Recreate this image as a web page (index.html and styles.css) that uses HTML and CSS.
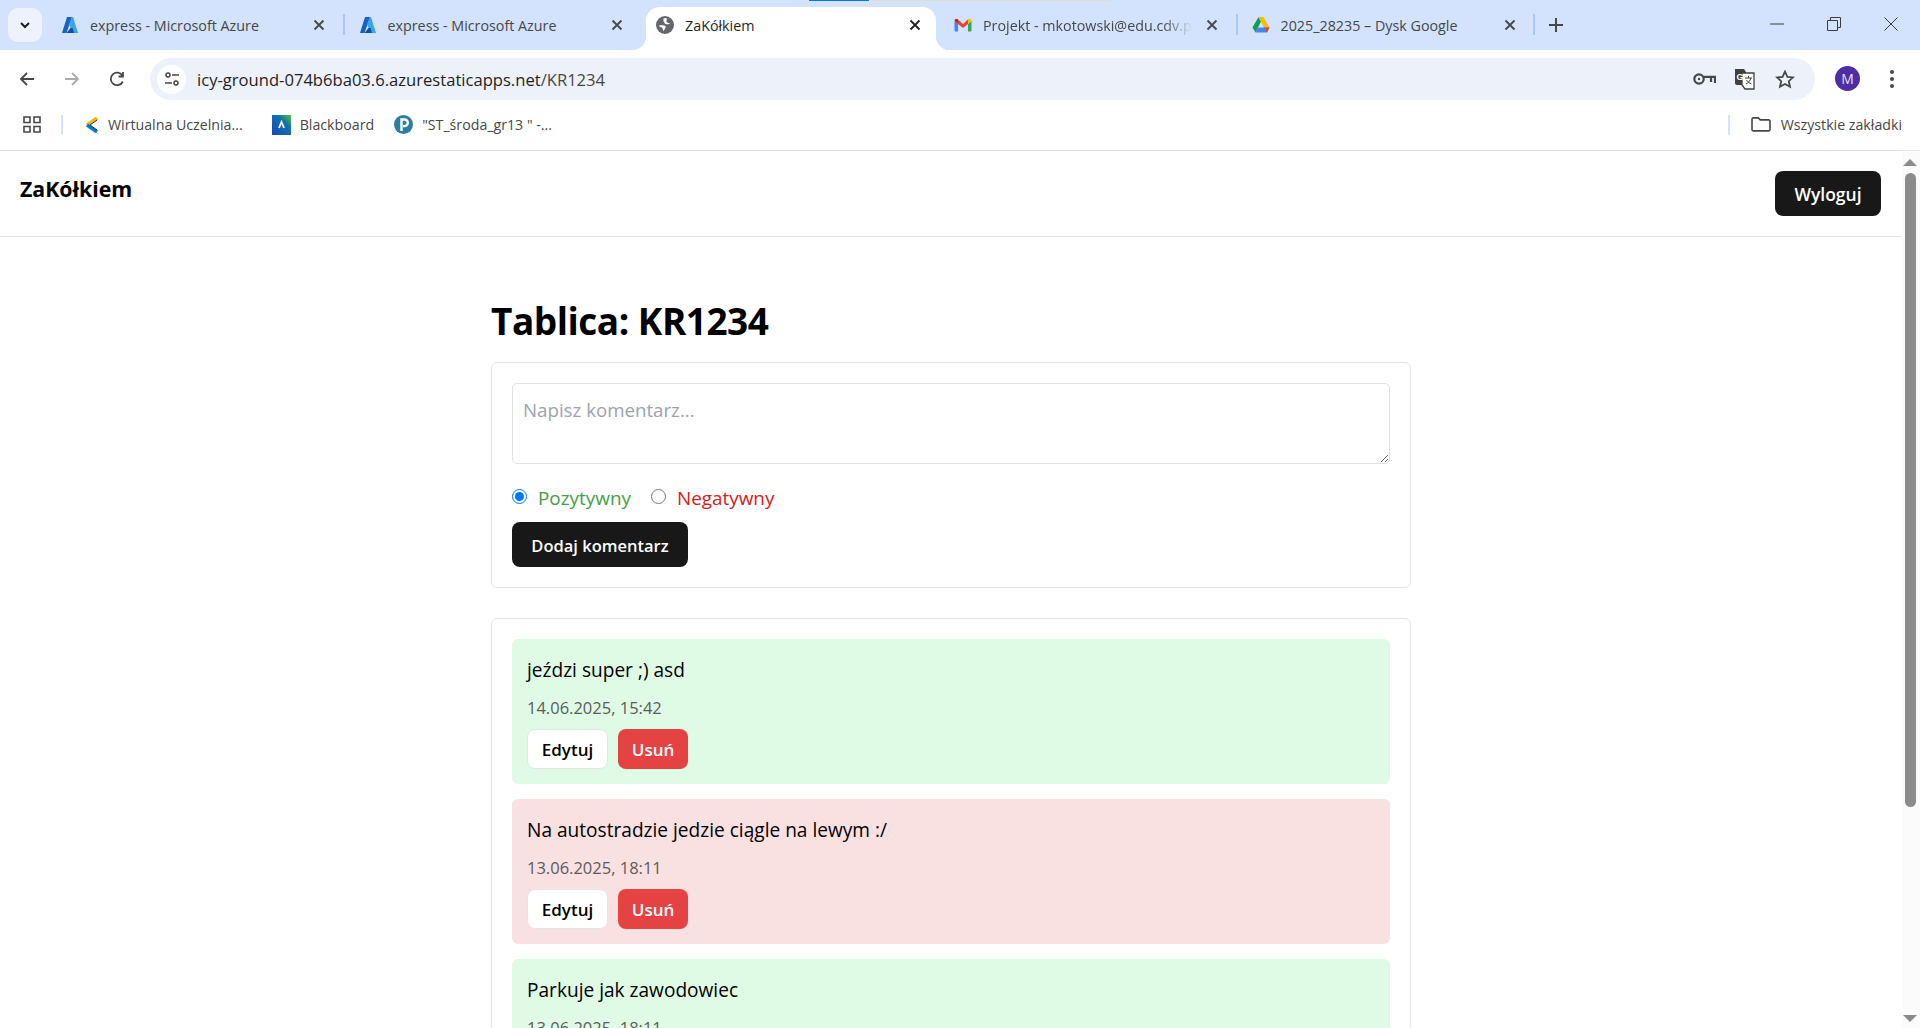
FILE: index.html
```html
<!DOCTYPE html>
<html lang="pl">
<head>
    <meta charset="UTF-8">
    <title>ZaKółkiem</title>
    <link rel="stylesheet" href="styles.css">
</head>
<body>
    <div class="tabstrip">
        <div class="tab-progress"></div>
        <div class="tab-search">
            <svg width="14" height="14" viewBox="0 0 14 14"><path d="M3 5l4 4 4-4" fill="none" stroke="#1f1f1f" stroke-width="2"/></svg>
        </div>
        <div class="tab tab-sep">
            <svg class="tab-icon" viewBox="0 0 18 18"><path d="M6 1h5L5.500 17H1z" fill="#1a62bd"/><path d="M11 1h1l5 16h-5.500L8 8z" fill="#3aa4ea"/><path d="M5.500 17l4-5h2l1.500 5z" fill="#0f4f9e"/></svg>
            <span class="tab-title">express - Microsoft Azure</span>
            <svg class="tab-close" viewBox="0 0 12 12"><path d="M1.500 1.500l9 9M10.500 1.500l-9 9"/></svg>
        </div>
        <div class="tab">
            <svg class="tab-icon" viewBox="0 0 18 18"><path d="M6 1h5L5.500 17H1z" fill="#1a62bd"/><path d="M11 1h1l5 16h-5.500L8 8z" fill="#3aa4ea"/><path d="M5.500 17l4-5h2l1.500 5z" fill="#0f4f9e"/></svg>
            <span class="tab-title">express - Microsoft Azure</span>
            <svg class="tab-close" viewBox="0 0 12 12"><path d="M1.500 1.500l9 9M10.500 1.500l-9 9"/></svg>
        </div>
        <div class="tab tab-active">
            <svg class="tab-icon" viewBox="0 0 18 18"><circle cx="9" cy="9" r="9" fill="#63666a"/><path d="M7.500 2.500c1-.5 2.500-.5 3.500 0 0 1.500-1 2.500-.5 3.500 1 1 2.500 1 3.500 1.500-1 1-3 1-4.500.5C8 7 7 5 7.500 2.500z" fill="#fff"/><path d="M3 9.500c2-.5 5-.5 6.500.5.5 1.500-.5 3-2 5-1-1-.5-2.500-1.500-3.500C5 11 3.500 11 3 9.500z" fill="#fff"/></svg>
            <span class="tab-title">ZaKółkiem</span>
            <svg class="tab-close" viewBox="0 0 12 12"><path d="M1.500 1.500l9 9M10.500 1.500l-9 9"/></svg>
        </div>
        <div class="tab tab-sep">
            <svg class="tab-icon" viewBox="0 0 18 18"><path d="M.5 5v9.500a1 1 0 0 0 1 1H4V8z" fill="#4285f4"/><path d="M17.500 5v9.500a1 1 0 0 1-1 1H14V8z" fill="#34a853"/><path d="M4 8V3.500l5 4.500 5-4.500V8l-5 4z" fill="#ea4335"/><path d="M.5 5c0-2 2.200-2.800 3.500-1.500V8z" fill="#c5221f"/><path d="M17.500 5c0-2-2.200-2.800-3.500-1.500V8z" fill="#fbbc04"/></svg>
            <span class="tab-title tab-fade">Projekt - mkotowski@edu.cdv.pl - Poczta</span>
            <svg class="tab-close" viewBox="0 0 12 12"><path d="M1.500 1.500l9 9M10.500 1.500l-9 9"/></svg>
        </div>
        <div class="tab tab-sep">
            <svg class="tab-icon" viewBox="0 0 18 18"><path d="M6.500 1L9 5.500 3.500 16.500.5 11.500z" fill="#0f9d58"/><path d="M6.500 1h5l6 10.500H12z" fill="#fbbc04"/><path d="M3.500 16.500L6 11.500h11.500L15 16.500z" fill="#4285f4"/><path d="M17.500 11.500H12l3 5z" fill="#ea4335"/></svg>
            <span class="tab-title">2025_28235 – Dysk Google</span>
            <svg class="tab-close" viewBox="0 0 12 12"><path d="M1.500 1.500l9 9M10.500 1.500l-9 9"/></svg>
        </div>
        <svg class="tab-new" viewBox="0 0 16 16"><path d="M8 1v14M1 8h14"/></svg>
        <div class="window-btns">
            <svg viewBox="0 0 14 14"><path d="M0 7h14"/></svg>
            <svg viewBox="0 0 14 14"><path d="M.5 3.500h10v10H.5zM3.500 3.500V.5h10v10h-3"/></svg>
            <svg viewBox="0 0 14 14"><path d="M.5.5l13 13M13.500.5l-13 13"/></svg>
        </div>
    </div>

    <div class="toolbar">
        <div class="nav-btns">
            <svg viewBox="0 0 16 16"><path d="M15 8H2M8 2L2 8l6 6" stroke="#474747"/></svg>
            <svg viewBox="0 0 16 16"><path d="M1 8h13M8 2l6 6-6 6" stroke="#a9abad"/></svg>
            <svg viewBox="0 0 16 16"><path d="M13.800 10.500A6.300 6.300 0 1 1 13.400 4.500M14 1v4.500H9.500" stroke="#474747"/></svg>
        </div>
        <div class="omnibox">
            <div class="site-info">
                <svg viewBox="0 0 16 16" width="16" height="16"><circle cx="4" cy="4" r="2" fill="none" stroke="#474747" stroke-width="1.500"/><path d="M8 4h7M1 12h7" stroke="#474747" stroke-width="1.500"/><circle cx="12" cy="12" r="2" fill="none" stroke="#474747" stroke-width="1.500"/></svg>
            </div>
            <span class="url">icy-ground-074b6ba03.6.azurestaticapps.net<span class="url-path">/KR1234</span></span>
            <div class="omni-icons">
                <svg width="23" height="12" viewBox="0 0 23 12"><circle cx="6" cy="6" r="4.700" fill="none" stroke="#474747" stroke-width="2.200"/><circle cx="6" cy="6" r="1.200" fill="#474747"/><path d="M10.500 3.800H22V10M18 3.800V9" fill="none" stroke="#474747" stroke-width="2.200"/></svg>
                <svg width="21" height="21" viewBox="0 0 21 21"><path d="M1 0h9l2 3v13H3a2 2 0 0 1-2-2z" fill="#3f3f3f"/><path d="M8 4h12v16H11l-3-4z" fill="#fff" stroke="#3f3f3f" stroke-width="1.300"/><text x="2.500" y="10.500" font-size="9" font-weight="700" fill="#fff" font-family="Liberation Sans">G</text><path d="M11 9h7M14.500 7v2M17 9c-1 3-3 5-5 6M12.500 11c1 2 3 3 5 4" fill="none" stroke="#3f3f3f"/></svg>
                <svg class="omni-star" width="20" height="19" viewBox="0 0 20 19"><path d="M10 1.500l2.400 5.300 5.600.6-4.200 3.800 1.200 5.600L10 14l-5 2.800 1.200-5.600L2 7.400l5.600-.6z" fill="none" stroke="#474747" stroke-width="1.800"/></svg>
            </div>
        </div>
        <div class="avatar">M</div>
        <svg class="kebab" width="4" height="18" viewBox="0 0 4 18"><circle cx="2" cy="2" r="2"/><circle cx="2" cy="9" r="2"/><circle cx="2" cy="16" r="2"/></svg>
    </div>

    <div class="bookmarks">
        <svg class="apps" width="18" height="17" viewBox="0 0 18 17"><path d="M1 1h6v5.500H1zM11 1h6v5.500h-6zM1 10.500h6V16H1zM11 10.500h6V16h-6z" fill="none" stroke="#474747" stroke-width="1.600"/></svg>
        <div class="bm-sep"></div>
        <div class="bm bm-first">
            <svg width="14" height="16" viewBox="0 0 14 16"><path d="M13 1L3 8" fill="none" stroke="#f5b800" stroke-width="3.500"/><path d="M3 8l10 7" fill="none" stroke="#0a7bc8" stroke-width="3.500"/><path d="M13 3L6 8l7 5" fill="none" stroke="#123a5e" stroke-width="1"/></svg>
            <span>Wirtualna Uczelnia...</span>
        </div>
        <div class="bm bm-board">
            <svg width="19" height="20" viewBox="0 0 19 20"><defs><linearGradient id="bbg" x1="0" y1="1" x2="1" y2="0"><stop offset="0" stop-color="#1747b8"/><stop offset=".65" stop-color="#1273a8"/><stop offset="1" stop-color="#5cc02c"/></linearGradient></defs><rect width="19" height="20" fill="url(#bbg)"/><path d="M7 13l2.500-6L12 13" fill="none" stroke="#fff" stroke-width="1.800"/></svg>
            <span>Blackboard</span>
        </div>
        <div class="bm bm-pearson">
            <svg width="19" height="19" viewBox="0 0 19 19"><circle cx="9.500" cy="9.500" r="9.500" fill="#2a7f9e"/><path d="M7.500 16V4.500h3a3.300 3.300 0 0 1 0 6.600H9" fill="none" stroke="#fff" stroke-width="2.400"/></svg>
            <span>"ST_środa_gr13 " -...</span>
        </div>
        <div class="bm-sep bm-sep-right"></div>
        <div class="bm bm-all">
            <svg width="20" height="15" viewBox="0 0 20 15"><path d="M1 2.200a1.300 1.300 0 0 1 1.300-1.300h5l2 2h8.400a1.300 1.300 0 0 1 1.300 1.300v8.400a1.300 1.300 0 0 1-1.300 1.300H2.300a1.300 1.300 0 0 1-1.300-1.300z" fill="none" stroke="#474747" stroke-width="1.600"/></svg>
            <span>Wszystkie zakładki</span>
        </div>
    </div>

    <div class="viewport">
        <div class="page">
            <header class="site-header">
                <span class="brand">ZaKółkiem</span>
                <button class="btn btn-dark btn-logout">Wyloguj</button>
            </header>
            <main class="container">
                <h1 class="board-title">Tablica: KR1234</h1>
                <section class="card card-form">
                    <textarea class="comment-input" placeholder="Napisz komentarz..."></textarea>
                    <div class="radio-row">
                        <label class="radio-label positive"><input type="radio" name="kind" checked> Pozytywny</label>
                        <label class="radio-label negative"><input type="radio" name="kind"> Negatywny</label>
                    </div>
                    <button class="btn btn-dark btn-add">Dodaj komentarz</button>
                </section>
                <section class="card card-list">
                    <article class="comment comment-pos">
                        <p class="comment-text">jeździ super ;) asd</p>
                        <p class="comment-date">14.06.2025, 15:42</p>
                        <div class="comment-actions"><button class="btn btn-edit">Edytuj</button><button class="btn btn-del">Usuń</button></div>
                    </article>
                    <article class="comment comment-neg">
                        <p class="comment-text">Na autostradzie jedzie ciągle na lewym :/</p>
                        <p class="comment-date">13.06.2025, 18:11</p>
                        <div class="comment-actions"><button class="btn btn-edit">Edytuj</button><button class="btn btn-del">Usuń</button></div>
                    </article>
                    <article class="comment comment-pos">
                        <p class="comment-text">Parkuje jak zawodowiec</p>
                        <p class="comment-date">13.06.2025, 18:11</p>
                    </article>
                </section>
            </main>
        </div>
        <div class="scrollbar">
            <div class="scroll-up"></div>
            <div class="scroll-thumb"></div>
            <div class="scroll-down"></div>
        </div>
    </div>
</body>
</html>
```

FILE: styles.css
```css
* {
    box-sizing: border-box;
}
html, body {
    height: 100%;
}
body {
    margin: 0;
    overflow: hidden;
    display: flex;
    flex-direction: column;
    background: #fff;
    color: #000;
    font-family: "Open Sans", "Liberation Sans", sans-serif;
}

/* browser chrome */
.tabstrip {
    position: relative;
    height: 50px;
    flex: none;
    display: flex;
    align-items: flex-start;
    background: #d3e3fd;
    padding-left: 8px;
}
.tab-progress {
    position: absolute;
    top: 0;
    left: 809px;
    width: 300px;
    height: 1px;
    background: linear-gradient(90deg, #0b78d8 20%, #dcdcdc 20%);
}
.tab-search {
    width: 34px;
    height: 34px;
    margin-top: 8px;
    margin-right: 7px;
    display: flex;
    align-items: center;
    justify-content: center;
    background: #edf2fc;
    border-radius: 10px;
}
.tab {
    position: relative;
    width: 297.5px;
    height: 43px;
    margin-top: 7px;
    padding: 0 21.5px 7px 12px;
    display: flex;
    align-items: center;
    font-size: 14.3px;
    color: #45474a;
}
.tab-sep::after {
    content: "";
    position: absolute;
    right: 2px;
    top: 7px;
    width: 2px;
    height: 21px;
    background: #a8c7fa;
}
.tab-icon {
    width: 18px;
    height: 18px;
    flex: none;
    margin-right: 11px;
}
.tab-title {
    flex: 1;
    margin-right: 14px;
    white-space: nowrap;
    overflow: hidden;
}
.tab-fade {
    -webkit-mask-image: linear-gradient(90deg, #000 86%, transparent 100%);
    mask-image: linear-gradient(90deg, #000 86%, transparent 100%);
}
.tab-close {
    width: 12px;
    height: 12px;
    flex: none;
    fill: none;
    stroke: #45474a;
    stroke-width: 1.800;
}
.tab-active {
    width: 290px;
    margin-left: 2px;
    margin-right: 6px;
    padding-left: 10px;
    padding-right: 15px;
    background: #fff;
    border-radius: 14px 14px 0 0;
    color: #1f1f1f;
}
.tab-active .tab-close {
    stroke: #1f1f1f;
}
.tab-active::before,
.tab-active::after {
    content: "";
    position: absolute;
    bottom: 0;
    width: 14px;
    height: 14px;
}
.tab-active::before {
    left: -14px;
    background: radial-gradient(circle at 0 0, transparent 14px, #fff 14.500px);
}
.tab-active::after {
    right: -14px;
    background: radial-gradient(circle at 100% 0, transparent 14px, #fff 14.500px);
}
.tab-new {
    width: 16px;
    height: 16px;
    margin-top: 17px;
    margin-left: 11px;
    fill: none;
    stroke: #45474a;
    stroke-width: 2;
}
.window-btns {
    margin-left: auto;
    display: flex;
    align-items: center;
    gap: 43px;
    height: 48px;
    padding-right: 22px;
}
.window-btns svg {
    width: 14px;
    height: 14px;
    fill: none;
    stroke: #3c3c3c;
    stroke-width: 1;
}

.toolbar {
    height: 55px;
    flex: none;
    display: flex;
    align-items: flex-start;
    padding-top: 8px;
    background: #fff;
}
.nav-btns {
    display: flex;
    align-items: center;
    gap: 29px;
    height: 42px;
    width: 150px;
    padding-left: 19px;
}
.nav-btns svg {
    width: 16px;
    height: 16px;
    fill: none;
    stroke-width: 1.800;
}
.omnibox {
    width: 1665px;
    height: 42px;
    display: flex;
    align-items: center;
    background: #edf2fa;
    border-radius: 21px;
    padding-left: 7px;
}
.site-info {
    width: 29px;
    height: 29px;
    margin-right: 11px;
    border-radius: 50%;
    background: #fff;
    display: flex;
    align-items: center;
    justify-content: center;
}
.url {
    font-size: 16.600px;
    color: #1f1f1f;
}
.url-path {
    color: #474747;
}
.omni-icons {
    margin-left: auto;
    display: flex;
    align-items: center;
    gap: 18px;
    padding-right: 20px;
}
.omni-star {
    margin-left: 2px;
}
.avatar {
    width: 25px;
    height: 25px;
    margin: 8px 0 0 20px;
    border-radius: 50%;
    background: #4f2ea3;
    color: #e8e0ff;
    font-size: 14px;
    line-height: 25px;
    text-align: center;
}
.kebab {
    margin: 12px 0 0 30px;
    fill: #474747;
}

.bookmarks {
    height: 45px;
    flex: none;
    display: flex;
    align-items: center;
    padding: 0 18px 6px 23px;
    font-size: 14.200px;
    color: #474747;
}
.bm {
    display: flex;
    align-items: center;
    white-space: nowrap;
}
.bm-sep {
    width: 2px;
    height: 20px;
    background: #d3e3fd;
    margin-left: 20px;
}
.bm-first {
    margin-left: 21px;
    gap: 10px;
}
.bm-board {
    margin-left: 29px;
    gap: 9px;
}
.bm-pearson {
    margin-left: 20px;
    gap: 9px;
}
.bm-sep-right {
    margin-left: auto;
}
.bm-all {
    margin-left: 21px;
    gap: 10px;
}

/* page */
.viewport {
    flex: 1;
    min-height: 0;
    display: flex;
    border-top: 1px solid #e3e3e3;
}
.page {
    flex: 1;
    min-width: 0;
    overflow: hidden;
}
.site-header {
    height: 86px;
    padding: 20px 21px 0 20px;
    display: flex;
    justify-content: space-between;
    align-items: flex-start;
    border-bottom: 1px solid #e5e5e5;
}
.brand {
    margin-top: 4px;
    font-size: 21.300px;
    line-height: 28px;
    font-weight: 700;
}
.btn {
    border: none;
    border-radius: 8px;
    font-family: inherit;
    font-weight: 600;
    cursor: pointer;
}
.btn-dark {
    background: #181818;
    color: #fff;
    font-size: 17.500px;
}
.btn-logout {
    width: 106px;
    height: 45px;
}
.container {
    width: 920px;
    margin: 0 auto;
    padding-top: 61px;
}
.board-title {
    margin: 0 0 18px;
    font-size: 37px;
    line-height: 46px;
    letter-spacing: -0.5px;
    font-weight: 700;
}
.card {
    border: 1px solid #e5e5e5;
    border-radius: 6px;
    padding: 20px;
    margin-bottom: 30px;
}
.card-form {
    height: 226px;
}
.comment-input {
    display: block;
    width: 100%;
    height: 81px;
    padding: 13px 10px;
    border: 1px solid #e2e2e2;
    border-radius: 5px;
    font-family: inherit;
    font-size: 18.700px;
    outline: none;
}
.comment-input::placeholder {
    color: #9ca3af;
}
.radio-row {
    display: flex;
    gap: 20px;
    margin-top: 20px;
    height: 38px;
    font-size: 18.900px;
}
.radio-label {
    display: flex;
    align-items: flex-start;
    line-height: 28px;
}
.radio-label input {
    width: 15px;
    height: 15px;
    margin: 5px 11px 0 0;
}
.positive {
    color: #43a047;
}
.negative {
    color: #d32020;
}
.btn-add {
    width: 176px;
    height: 45px;
    font-size: 16.500px;
    padding-top: 2px;
}
.comment {
    border-radius: 6px;
    padding: 17px 15px 0;
    margin-bottom: 15px;
    height: 145px;
}
.comment-pos {
    background: #dffbe5;
}
.comment-neg {
    background: #f9e0e1;
}
.comment-text {
    margin: 0;
    font-size: 19.100px;
    line-height: 28px;
}
.comment-date {
    margin: 11px 0 0;
    font-size: 16.500px;
    line-height: 26px;
    color: #5c5c5c;
}
.comment-actions {
    display: flex;
    gap: 10px;
    margin-top: 8px;
}
.btn-edit {
    width: 81px;
    height: 40px;
    background: #fff;
    border: 1px solid #e5e5e5;
    font-size: 17px;
    color: #000;
}
.btn-del {
    width: 70px;
    height: 40px;
    background: #e54343;
    color: #fff;
    font-size: 17px;
}

/* scrollbar drawn by hand since the page itself is clipped */
.scrollbar {
    width: 18px;
    flex: none;
    position: relative;
    background: #fbfbfb;
}
.scroll-thumb {
    position: absolute;
    top: 22px;
    left: 3px;
    width: 11px;
    height: 634px;
    border-radius: 6px;
    background: #8b8b8b;
}
.scroll-up,
.scroll-down {
    position: absolute;
    left: 1px;
    width: 0;
    height: 0;
    border-left: 7px solid transparent;
    border-right: 7px solid transparent;
}
.scroll-up {
    top: 8px;
    border-bottom: 7px solid #8b8b8b;
}
.scroll-down {
    bottom: 6px;
    border-top: 7px solid #8b8b8b;
}
```
